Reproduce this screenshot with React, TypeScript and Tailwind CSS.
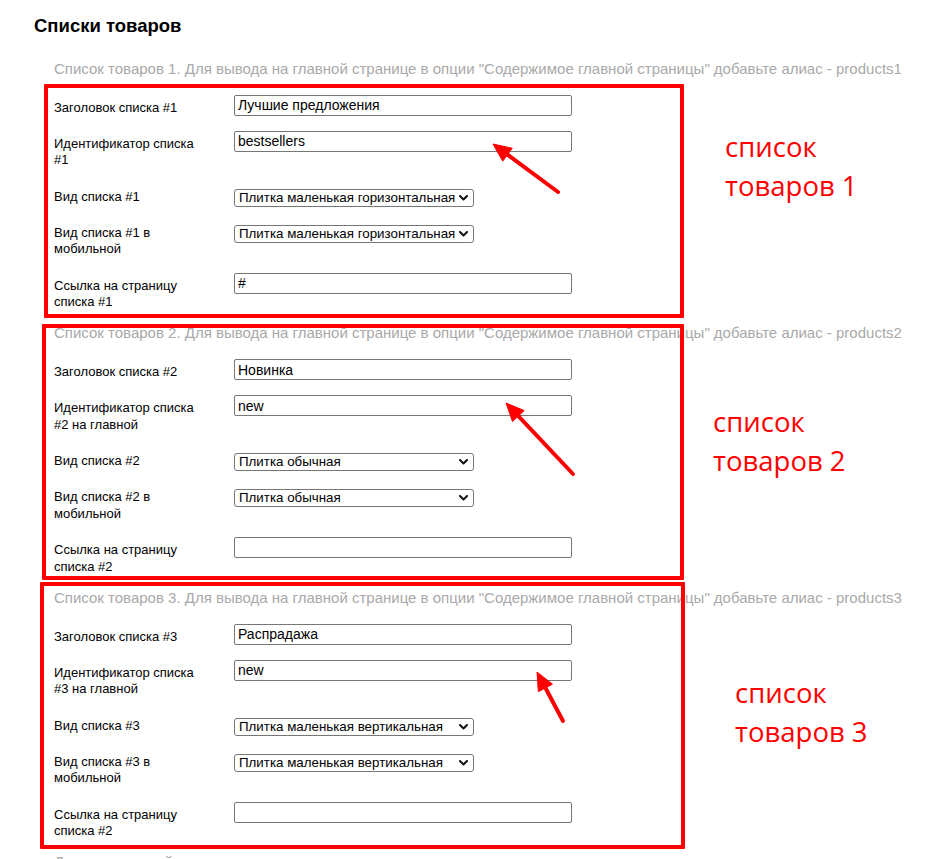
import React from "react";

type Row = { label: string; kind: "input" | "select"; value: string };
type Section = { hint: string; rows: Row[] };

const sections: Section[] = [
  {
    hint: 'Список товаров 1. Для вывода на главной странице в опции "Содержимое главной страницы" добавьте алиас - products1',
    rows: [
      { label: "Заголовок списка #1", kind: "input", value: "Лучшие предложения" },
      { label: "Идентификатор списка #1", kind: "input", value: "bestsellers" },
      { label: "Вид списка #1", kind: "select", value: "Плитка маленькая горизонтальная" },
      { label: "Вид списка #1 в мобильной", kind: "select", value: "Плитка маленькая горизонтальная" },
      { label: "Ссылка на страницу списка #1", kind: "input", value: "#" },
    ],
  },
  {
    hint: 'Список товаров 2. Для вывода на главной странице в опции "Содержимое главной страницы" добавьте алиас - products2',
    rows: [
      { label: "Заголовок списка #2", kind: "input", value: "Новинка" },
      { label: "Идентификатор списка #2 на главной", kind: "input", value: "new" },
      { label: "Вид списка #2", kind: "select", value: "Плитка обычная" },
      { label: "Вид списка #2 в мобильной", kind: "select", value: "Плитка обычная" },
      { label: "Ссылка на страницу списка #2", kind: "input", value: "" },
    ],
  },
  {
    hint: 'Список товаров 3. Для вывода на главной странице в опции "Содержимое главной страницы" добавьте алиас - products3',
    rows: [
      { label: "Заголовок списка #3", kind: "input", value: "Распрадажа" },
      { label: "Идентификатор списка #3 на главной", kind: "input", value: "new" },
      { label: "Вид списка #3", kind: "select", value: "Плитка маленькая вертикальная" },
      { label: "Вид списка #3 в мобильной", kind: "select", value: "Плитка маленькая вертикальная" },
      { label: "Ссылка на страницу списка #2", kind: "input", value: "" },
    ],
  },
];

function Field({ row }: { row: Row }) {
  return (
    <div className="flex items-start">
      <div className="w-[180px] shrink-0 pr-[30px] pt-[5px] pb-[1.5px] text-[13px] leading-[16.5px] text-black">
        {row.label}
      </div>
      {row.kind === "input" ? (
        <input
          readOnly
          value={row.value}
          className="block h-[21px] w-[338px] rounded-[2px] border border-[#767676] bg-white px-[3px] text-[14px] leading-[17px] text-black outline-none"
        />
      ) : (
        <div className="relative mt-[5px] h-[18px] w-[240px]">
          <select
            value={row.value}
            onChange={() => {}}
            className="block h-[18px] w-[240px] appearance-none rounded-[3px] border border-[#767676] bg-white py-0 pl-[4px] text-[13.33px] leading-[16px] text-black outline-none"
          >
            <option>{row.value}</option>
          </select>
          <svg
            className="pointer-events-none absolute right-[6px] top-[6px]"
            width="9"
            height="6"
            viewBox="0 0 9 6"
          >
            <path d="M1 1 L4.5 4.5 L8 1" stroke="#111" strokeWidth="2" fill="none" strokeLinecap="round" strokeLinejoin="round" />
          </svg>
        </div>
      )}
    </div>
  );
}

function Arrow({ x1, y1, x2, y2 }: { x1: number; y1: number; x2: number; y2: number }) {
  const dx = x2 - x1;
  const dy = y2 - y1;
  const L = Math.hypot(dx, dy);
  const ux = dx / L;
  const uy = dy / L;
  const hl = 18;
  const hw = 8;
  const bx = x2 - ux * hl;
  const by = y2 - uy * hl;
  const px = -uy;
  const py = ux;
  const pts = `${x2},${y2} ${bx + px * hw},${by + py * hw} ${bx - px * hw},${by - py * hw}`;
  return (
    <g>
      <line x1={x1} y1={y1} x2={bx + ux * 3} y2={by + uy * 3} stroke="#ff0000" strokeWidth="4" strokeLinecap="round" />
      <polygon points={pts} fill="#ff0000" stroke="#ff0000" strokeWidth="1" strokeLinejoin="round" />
    </g>
  );
}

export default function App() {
  return (
    <div className="relative h-[859px] w-[934px] overflow-hidden bg-white font-['Liberation_Sans',Arial,sans-serif] text-black">
      <div className="pl-[34px] pt-[15px] text-[18.5px] font-bold leading-[22px]">Списки товаров</div>

      <div className="mt-[22.6px] flex flex-col gap-[12px] pl-[54px]">
        {sections.map((s, i) => (
          <div key={i} className="flex flex-col">
            <div className="whitespace-nowrap text-[15px] leading-[17px] text-[#a9a9a9]">{s.hint}</div>
            <div className="mt-[18px] flex flex-col gap-[13.25px]">
              {s.rows.map((r, j) => (
                <Field key={j} row={r} />
              ))}
            </div>
          </div>
        ))}
        <div className="whitespace-nowrap text-[15px] leading-[17px] text-[#a9a9a9]">Дополнительный текст</div>
      </div>

      {/* annotation frames */}
      <div className="pointer-events-none absolute left-[44px] top-[84px] h-[234px] w-[640px] rounded-[1px] border-4 border-[#ff0000]" />
      <div className="pointer-events-none absolute left-[42px] top-[324px] h-[256px] w-[642px] rounded-[1px] border-4 border-[#ff0000]" />
      <div className="pointer-events-none absolute left-[40px] top-[582px] h-[267px] w-[645px] rounded-[1px] border-4 border-[#ff0000]" />

      <svg className="pointer-events-none absolute left-0 top-0" width="934" height="859">
        <Arrow x1={558} y1={192} x2={493} y2={144} />
        <Arrow x1={573} y1={474} x2={506} y2={403} />
        <Arrow x1={563} y1={721} x2={537} y2={672} />
      </svg>

      <div className="pointer-events-none absolute left-[725px] top-[127px] font-['Open_Sans',sans-serif] text-[27.5px] leading-[39px] text-[#ff0000]">
        список
        <br />
        товаров 1
      </div>
      <div className="pointer-events-none absolute left-[713px] top-[402px] font-['Open_Sans',sans-serif] text-[27.5px] leading-[39px] text-[#ff0000]">
        список
        <br />
        товаров 2
      </div>
      <div className="pointer-events-none absolute left-[735px] top-[673px] font-['Open_Sans',sans-serif] text-[27.5px] leading-[39px] text-[#ff0000]">
        список
        <br />
        товаров 3
      </div>
    </div>
  );
}
